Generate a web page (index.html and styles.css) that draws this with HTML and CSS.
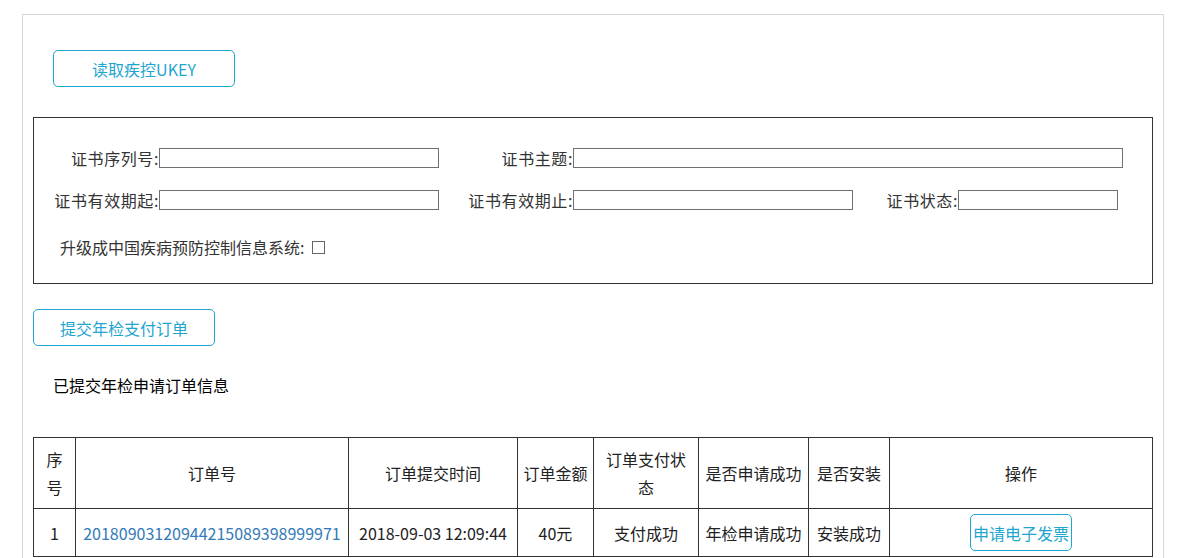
FILE: index.html
```html
<!DOCTYPE html>
<html lang="zh-CN">
<head>
<meta charset="utf-8">
<title>年检申请</title>
<link rel="stylesheet" href="styles.css">
</head>
<body>
<div class="page">
  <div class="top-actions">
    <button class="btn btn-wide" type="button">读取疾控UKEY</button>
  </div>
  <div class="cert-box">
    <div class="row">
      <label class="lbl lbl-a">证书序列号:</label><input class="inp w280" type="text">
      <label class="lbl lbl-b">证书主题:</label><input class="inp w550" type="text">
    </div>
    <div class="row">
      <label class="lbl lbl-a">证书有效期起:</label><input class="inp w280" type="text">
      <label class="lbl lbl-b">证书有效期止:</label><input class="inp w280" type="text">
      <label class="lbl lbl-c">证书状态:</label><input class="inp w160" type="text">
    </div>
    <div class="row row-check">
      <label class="lbl">升级成中国疾病预防控制信息系统:</label><span class="check"></span>
    </div>
  </div>
  <div class="submit-line">
    <button class="btn btn-wide" type="button">提交年检支付订单</button>
  </div>
  <p class="section-title">已提交年检申请订单信息</p>
  <table class="orders">
    <colgroup>
      <col class="c1"><col class="c2"><col class="c3"><col class="c4"><col class="c5"><col class="c6"><col class="c7"><col class="c8">
    </colgroup>
    <thead>
      <tr>
        <th>序号</th>
        <th>订单号</th>
        <th>订单提交时间</th>
        <th>订单金额</th>
        <th>订单支付状态</th>
        <th>是否申请成功</th>
        <th>是否安装</th>
        <th>操作</th>
      </tr>
    </thead>
    <tbody>
      <tr>
        <td>1</td>
        <td><a class="order-link" href="#">20180903120944215089398999971</a></td>
        <td>2018-09-03 12:09:44</td>
        <td>40元</td>
        <td>支付成功</td>
        <td>年检申请成功</td>
        <td>安装成功</td>
        <td><button class="btn btn-small" type="button">申请电子发票</button></td>
      </tr>
    </tbody>
  </table>
</div>
</body>
</html>
```
FILE: styles.css
```css
html, body {
  margin: 0;
  padding: 0;
  background: #fff;
}
body {
  font-family: "Microsoft YaHei", "Noto Sans CJK SC", "Noto Sans", sans-serif;
  font-size: 16px;
  color: #333;
  overflow: hidden;
}
.page {
  box-sizing: border-box;
  width: 1142px;
  height: 600px;
  margin: 14px 0 0 22px;
  border: 1px solid #d6d6d6;
  border-bottom: none;
  padding: 35px 10px 0 10px;
}
.top-actions {
  padding-left: 20px;
  height: 37px;
}
.btn {
  box-sizing: border-box;
  background: #fff;
  border: 1px solid #1fa6cf;
  border-radius: 5px;
  color: #1fa6cf;
  font-family: inherit;
  font-size: 16px;
  line-height: 20px;
  cursor: pointer;
  padding: 0;
}
.btn-wide {
  width: 182px;
  height: 37px;
}
.btn-small {
  width: 102px;
  height: 37px;
  padding: 0 2px;
  white-space: nowrap;
}
.cert-box {
  box-sizing: border-box;
  width: 1120px;
  height: 167px;
  margin-top: 30px;
  border: 1px solid #333;
  padding-top: 30px;
}
.row {
  display: flex;
  align-items: center;
  height: 20px;
  margin-bottom: 22px;
}
.lbl {
  box-sizing: border-box;
  white-space: nowrap;
  color: #333;
  line-height: 20px;
  text-align: right;
  letter-spacing: 0.6px;
}
.lbl-a { width: 125px; }
.lbl-b { width: 134px; }
.lbl-c { width: 105px; }
.inp {
  box-sizing: border-box;
  height: 20px;
  border: 1px solid #707070;
  margin: 0;
  padding: 0 2px;
  background: #fff;
}
.w280 { width: 280px; }
.w550 { width: 550px; }
.w160 { width: 160px; }
.row-check {
  padding-left: 26px;
  margin-top: 27px;
}
.row-check .lbl {
  letter-spacing: 0;
}
.check {
  box-sizing: border-box;
  display: inline-block;
  width: 13px;
  height: 13px;
  border: 1px solid #666;
  margin-left: 8px;
  background: #fff;
}
.submit-line {
  margin-top: 25px;
  height: 37px;
}
.section-title {
  margin: 27px 0 0 20px;
  color: #000;
  line-height: 24px;
}
.orders {
  margin-top: 40px;
  width: 1120px;
  table-layout: fixed;
  border-collapse: collapse;
  color: #222;
}
.orders th, .orders td {
  border: 1px solid #333;
  padding: 0 5px;
  text-align: center;
  font-weight: normal;
  vertical-align: middle;
}
.orders th {
  height: 70px;
  line-height: 28px;
}
.orders td {
  height: 47px;
  white-space: nowrap;
}
.orders td:nth-child(2) {
  padding: 0 2px;
}
.c1 { width: 42px; }
.c2 { width: 273px; }
.c3 { width: 169px; }
.c4 { width: 76px; }
.c5 { width: 105px; }
.c6 { width: 110px; }
.c7 { width: 81px; }
.c8 { width: 263px; }
.order-link {
  color: #337ab7;
  text-decoration: none;
}
```
